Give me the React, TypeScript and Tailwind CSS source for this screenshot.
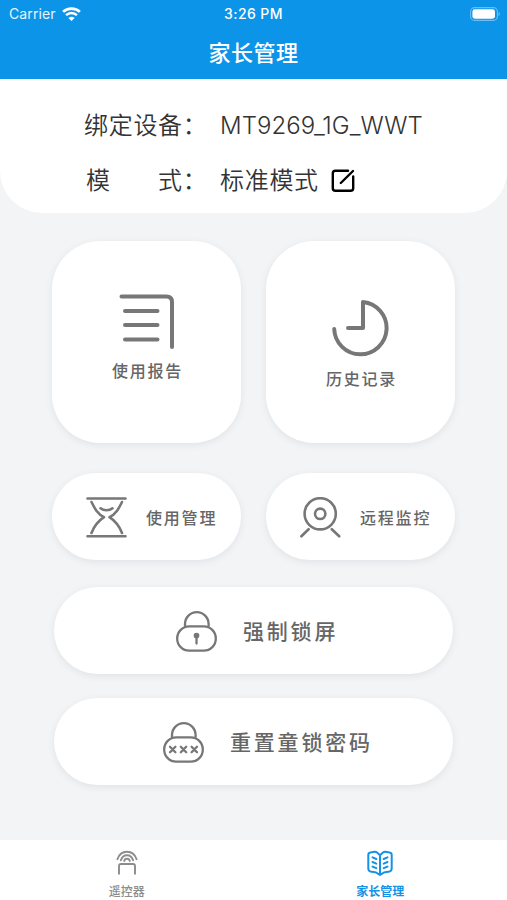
import type { ReactNode } from "react";

const stroke = {
  fill: "none",
  stroke: "currentColor",
  strokeLinecap: "round" as const,
  strokeLinejoin: "round" as const,
};

function WifiIcon() {
  return (
    <svg className="ml-[6px] h-[14px] w-[19px]" viewBox="0 0 19 14" fill="none" stroke="white">
      <path d="M1.1 4.9C5.6.4 13.4.4 17.9 4.9" strokeWidth="2.7" />
      <path d="M4.1 8.1C7.2 5.2 11.8 5.2 14.9 8.1" strokeWidth="2.5" />
      <path d="M9.5 14 6.4 10.9C8.1 9.3 10.9 9.3 12.6 10.9Z" fill="white" stroke="none" />
    </svg>
  );
}

function BatteryIcon() {
  return (
    <svg className="h-[14px] w-[31px]" viewBox="0 0 31 14" fill="none">
      <rect x=".6" y=".6" width="26.8" height="12.8" rx="4" stroke="#6dbef4" strokeWidth="1.1" />
      <rect x="2.4" y="2.3" width="22.6" height="9.4" rx="2.4" fill="white" />
      <path d="M28.6 4.8C30.4 5.6 30.4 8.4 28.6 9.2Z" fill="#6dbef4" />
    </svg>
  );
}

function EditIcon() {
  return (
    <svg className="ml-[12px] h-6 w-6 text-black" viewBox="0 0 24 24" {...stroke} strokeWidth="2.4">
      <path d="M17 1.8H4.4Q1.8 1.8 1.8 4.4V19.2Q1.8 21.8 4.4 21.8H19.6Q22.2 21.8 22.2 19.2V7.5" />
      <path d="M9.8 14 22 2" />
    </svg>
  );
}

function ReportIcon() {
  return (
    <svg className="h-[55px] w-[56px]" viewBox="0 0 56 55" {...stroke} strokeWidth="4">
      <path d="M2.5 2.5H47.5Q53 2.5 53 8V53" />
      <path d="M6 17H38.5M6 31H38.5M6 45.5H38.5" />
    </svg>
  );
}

function HistoryIcon() {
  return (
    <svg className="h-[58px] w-[57px]" viewBox="0 0 57 58" {...stroke} strokeWidth="4">
      <path d="M2.2 30A26.2 26.2 0 1 0 31 3V29H16" />
    </svg>
  );
}

function HourglassIcon() {
  return (
    <svg className="h-[41px] w-[41px]" viewBox="0 0 41 41" {...stroke} strokeWidth="2.6">
      <path d="M1.5 1.5H39.5M1.5 39.3H39.5" />
      <path d="M5.5 5C9 12 11.5 17 18 20.2C11.5 24.5 8 29.5 5.5 36" />
      <path d="M36 5C32.5 12 30 17 23.5 20.2C30 24.5 33.5 29.5 36 36" />
      <path d="M14.5 11.3C17.8 13.9 23.3 13.9 26.5 11.3" />
    </svg>
  );
}

function CameraIcon() {
  return (
    <svg className="h-[41px] w-[41px]" viewBox="0 0 41 41" {...stroke} strokeWidth="2.6">
      <circle cx="20.2" cy="16.8" r="15.6" />
      <circle cx="20.2" cy="16.8" r="5.2" />
      <path d="M8.6 32.2 1.4 39.3M31.8 32.2 39.2 39.3" />
    </svg>
  );
}

function LockIcon({ children }: { children: ReactNode }) {
  return (
    <svg className="h-[41px] w-[41px]" viewBox="0 0 41 41" {...stroke} strokeWidth="2.3">
      <path d="M9 15V13A11.8 11.8 0 0 1 32.6 13V15" />
      <rect x="1.2" y="15.4" width="38.6" height="24.3" rx="12" />
      {children}
    </svg>
  );
}

function RemoteIcon() {
  return (
    <svg className="h-[26px] w-[22px]" viewBox="0 0 22 26" {...stroke} strokeWidth="1.9">
      <path d="M1.4 9.2C4.8-.8 17.2-.8 20.6 9.2" />
      <path d="M4.9 10.3C7 3.6 15 3.6 17.1 10.3" />
      <path d="M8.2 11C8.8 8 13.2 8 13.8 11" />
      <path d="M3 24.5V16Q3 14 5 14H17Q19 14 19 16V24.5" strokeLinecap="butt" />
    </svg>
  );
}

function BookIcon() {
  return (
    <svg className="h-[26px] w-[26px]" viewBox="0 0 26 26" {...stroke} strokeWidth="2">
      <path d="M13 5.2 10 2.6Q9 1.7 7.6 1.8L3.4 2.4Q1.3 2.8 1.3 4.8V18.6Q1.3 20.8 3.3 21.4L8 22.2Q9.3 22.4 10.4 23.3L13 25L15.6 23.3Q16.7 22.4 18 22.2L22.7 21.4Q24.7 20.8 24.7 18.6V4.8Q24.7 2.8 22.6 2.4L18.4 1.8Q17 1.7 16 2.6ZM13 5.2V24.5" />
      <path d="M5.5 7.3 9.3 9M5.5 12 9.3 13.6M5.5 16.6 9.3 18.2M20.5 7.3 16.7 9M20.5 12 16.7 13.6M20.5 16.6 16.7 18.2" />
    </svg>
  );
}

const shadow = "bg-white shadow-[0_2px_7px_rgba(80,90,100,0.10)]";

function Tile({ icon, label, className }: { icon: ReactNode; label: string; className: string }) {
  return (
    <button className={`flex h-[202px] w-[189px] flex-col items-center rounded-[48px] ${shadow} ${className}`}>
      <span className="text-[#777]">{icon}</span>
      <span className="mt-[10px] pl-[2px] text-[16px] leading-6 tracking-[1.8px]">{label}</span>
    </button>
  );
}

function Pill({ icon, label }: { icon: ReactNode; label: string }) {
  return (
    <button className={`flex h-[87px] w-[189px] items-center rounded-[44px] pt-px pl-[34px] ${shadow}`}>
      <span className="text-[#777]">{icon}</span>
      <span className="ml-[19px] pt-px text-[16px] leading-6 tracking-[1.8px]">{label}</span>
    </button>
  );
}

function WideButton({ icon, label, className }: { icon: ReactNode; label: string; className: string }) {
  return (
    <button className={`flex h-[87px] w-[399px] items-center rounded-[44px] pt-px ${shadow} ${className}`}>
      <span className="text-[#777]">{icon}</span>
      <span className="ml-[26px] pt-px text-[21px] leading-8 tracking-[2.8px]">{label}</span>
    </button>
  );
}

export default function App() {
  return (
    <div className="flex h-[900px] w-[507px] flex-col overflow-hidden bg-[#f2f4f6] font-['Inter','Noto_Sans_CJK_SC',sans-serif] text-[#666]">
      <header className="h-[79px] shrink-0 bg-[#0c94e8] text-white">
        <div className="grid h-[27px] grid-cols-3 items-center pr-[6px] pl-[9px]">
          <div className="flex items-center text-[14px] tracking-[0.1px] text-[#e6f5ff]">
            Carrier
            <WifiIcon />
          </div>
          <div className="pr-[3px] text-center text-[14px] font-medium tracking-[0.4px]">3:26 PM</div>
          <div className="flex justify-end">
            <BatteryIcon />
          </div>
        </div>
        <h1 className="pt-px text-center text-[22px] leading-[50px] font-medium tracking-[0.5px]">家长管理</h1>
      </header>

      <section className="h-[134px] shrink-0 rounded-b-[42px] bg-white pt-[27px] pl-[84px] text-[24px] leading-10 font-[350] text-[#333]">
        <div className="flex h-10 items-center">
          <span className="w-[136px] tracking-[0.7px] whitespace-nowrap">绑定设备：</span>
          <span className="tracking-[0.05px]">MT9269_1G_WWT</span>
        </div>
        <div className="mt-[15px] flex h-10 items-center">
          <span className="flex w-[136px] pl-[2px]">
            <span className="w-[72px]">模</span>
            <span className="tracking-[0.7px]">式：</span>
          </span>
          <span className="tracking-[0.7px]">标准模式</span>
          <EditIcon />
        </div>
      </section>

      <main className="flex flex-1 flex-col font-medium">
        <div className="mt-[28px] flex gap-[25px] pl-[52px]">
          <Tile icon={<ReportIcon />} label="使用报告" className="pt-[53px]" />
          <Tile icon={<HistoryIcon />} label="历史记录" className="pt-[58px]" />
        </div>
        <div className="mt-[30px] flex gap-[25px] pl-[52px]">
          <Pill icon={<HourglassIcon />} label="使用管理" />
          <Pill icon={<CameraIcon />} label="远程监控" />
        </div>
        <div className="mt-[27px] flex flex-col gap-[24px] pl-[54px]">
          <WideButton
            className="pl-[122px]"
            label="强制锁屏"
            icon={
              <LockIcon>
                <circle cx="20.5" cy="24.5" r="1.7" fill="currentColor" />
                <path d="M20.5 25V32.5" />
              </LockIcon>
            }
          />
          <WideButton
            className="pl-[109px]"
            label="重置童锁密码"
            icon={
              <LockIcon>
                <path d="M7 24.8 12.4 30.2M12.4 24.8 7 30.2M17.8 24.8 23.2 30.2M23.2 24.8 17.8 30.2M28.6 24.8 34 30.2M34 24.8 28.6 30.2" />
              </LockIcon>
            }
          />
        </div>
      </main>

      <nav className="grid h-[60px] shrink-0 grid-cols-2 bg-white text-[12px] leading-4 font-medium">
        <button className="flex flex-col items-center pt-[10px] text-[#8c8c8c]">
          <RemoteIcon />
          <span className="mt-[8px]">遥控器</span>
        </button>
        <button className="flex flex-col items-center pt-[10px] text-[#1592e6]">
          <BookIcon />
          <span className="mt-[8px] font-bold">家长管理</span>
        </button>
      </nav>
    </div>
  );
}
